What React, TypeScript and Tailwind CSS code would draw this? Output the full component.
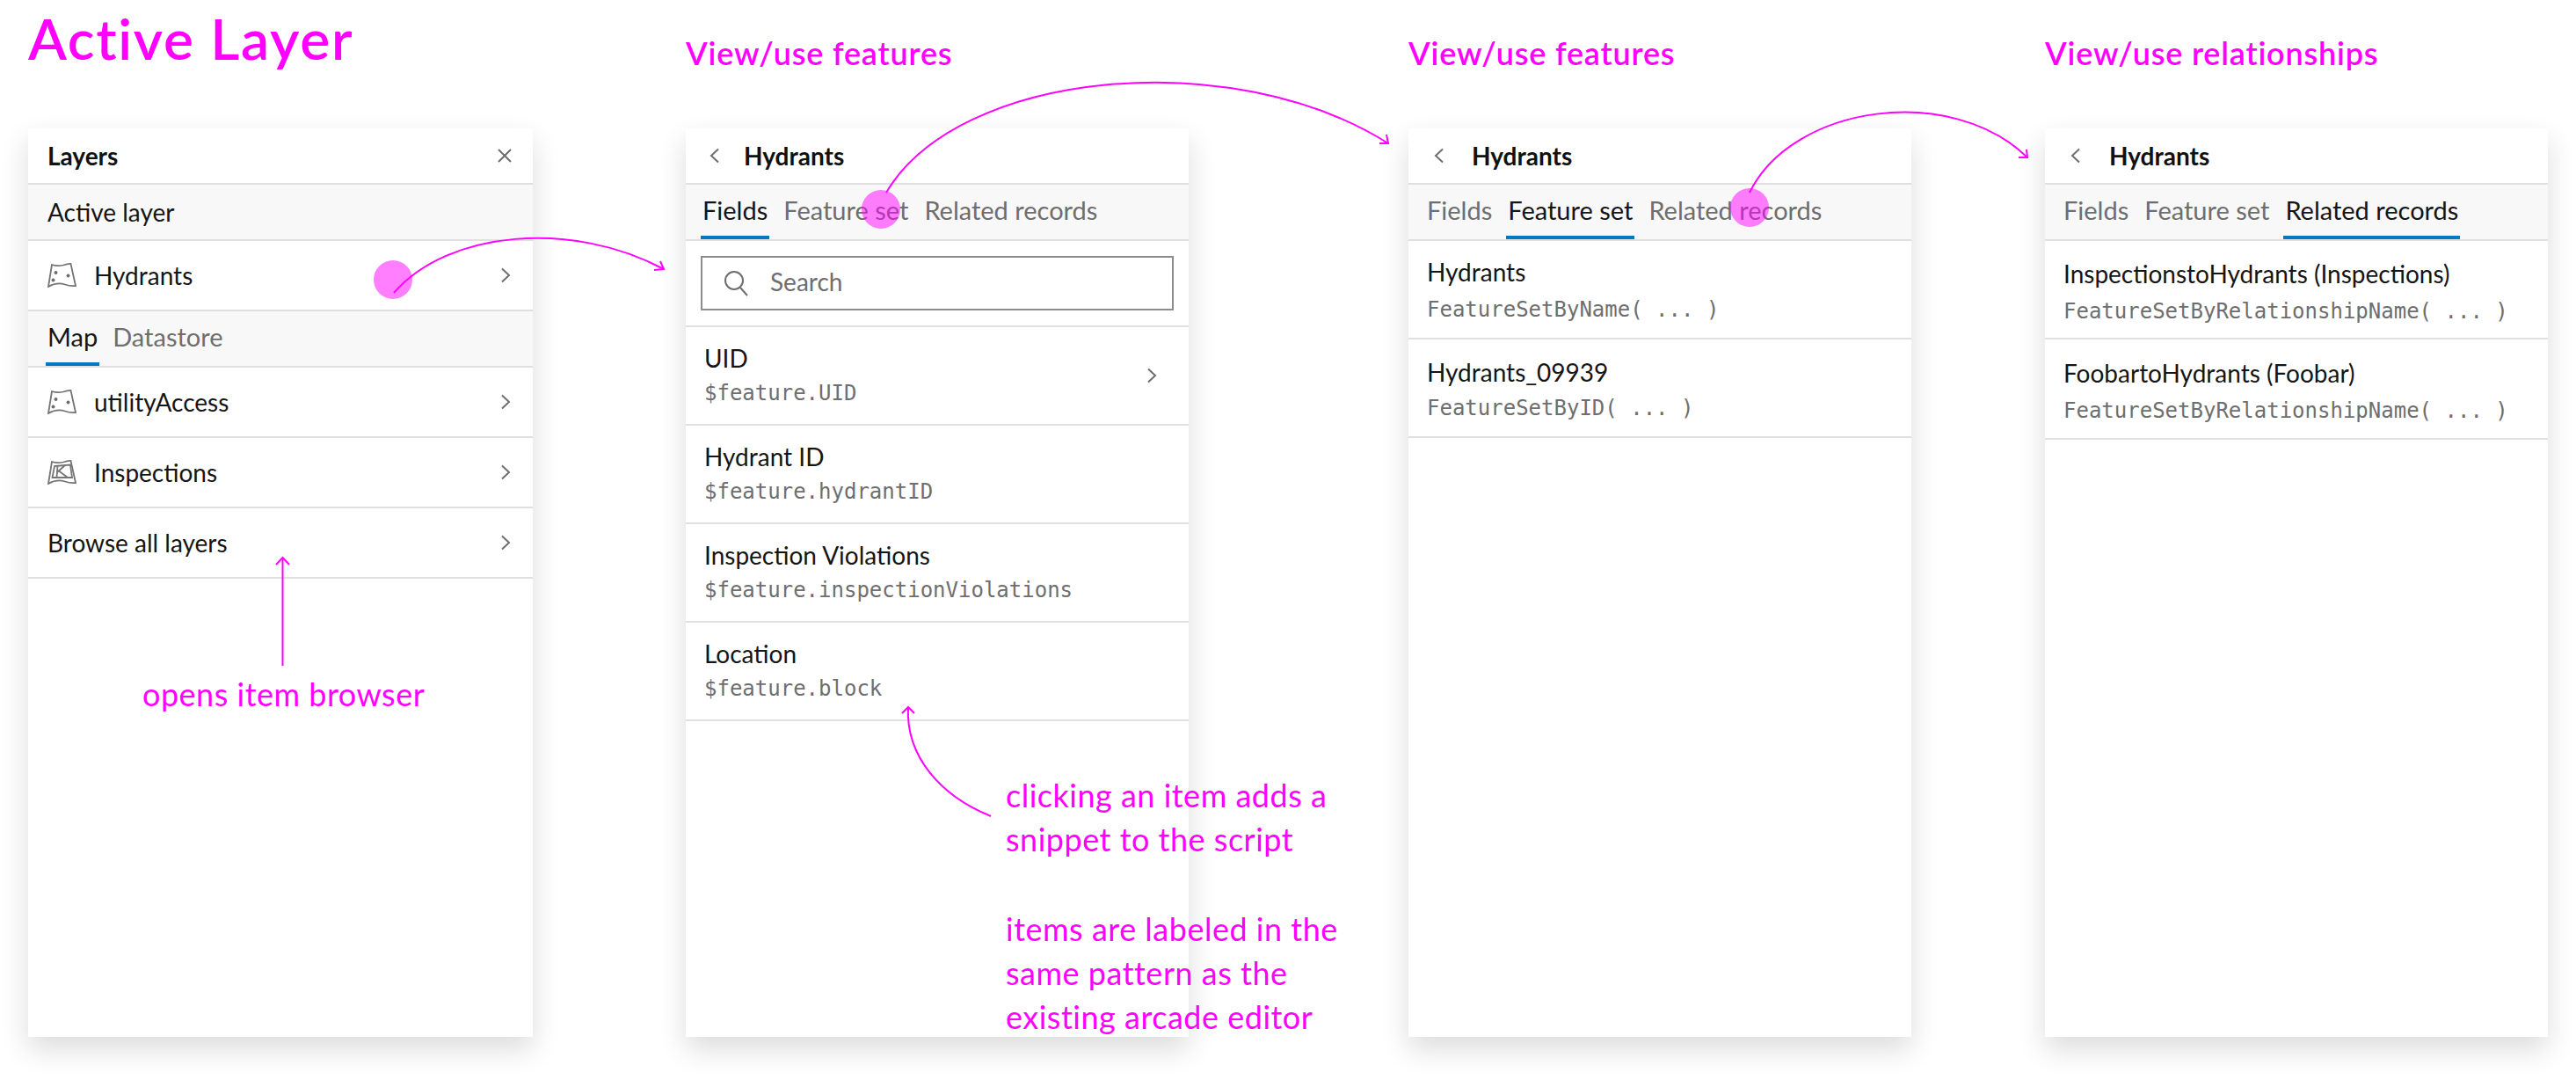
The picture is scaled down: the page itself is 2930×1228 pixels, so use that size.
import React from "react";

const Chevron = ({ dir = "right" }: { dir?: "right" | "left" }) => (
  <svg width="12" height="18" viewBox="0 0 12 18" fill="none" stroke="#6e6e6e" strokeWidth="2" className="shrink-0">
    {dir === "right" ? <path d="M2 1.5 L10 9 L2 16.5" /> : <path d="M10 1.5 L2 9 L10 16.5" />}
  </svg>
);

const OUTLINE = "M5 2 C 10 3.5 14 3.5 18 2.5 C 21 1.5 24 0.5 26.5 1 L 32 26 C 27 26.5 24 26 20 24.5 C 14 22.5 8 23 1 27 Z";

const LayerIcon = () => (
  <svg width="33" height="28" viewBox="0 0 33 28" fill="none" stroke="#757575" strokeWidth="1.8" className="shrink-0">
    <path d={OUTLINE} />
    <circle cx="9.5" cy="11" r="2" fill="#6e6e6e" stroke="none" />
    <circle cx="23.5" cy="14.5" r="2" fill="#6e6e6e" stroke="none" />
    <circle cx="6.5" cy="19.5" r="2" fill="#6e6e6e" stroke="none" />
  </svg>
);

const InspectIcon = () => (
  <svg width="33" height="28" viewBox="0 0 33 28" fill="none" stroke="#757575" strokeWidth="1.8" className="shrink-0">
    <path d={OUTLINE} />
    <path d="M8 7 L 26 5.5 L 28 20 L 5.5 20 Z" />
    <path d="M11.5 6.5 L 10.5 20 M 11 14 L 20 6 M 13 12.5 L 23 20" />
  </svg>
);

const Tabs = ({ active, items, left, gap = "gap-[14px]" }: { active: number; items: string[]; left: string; gap?: string }) => (
  <div className={`flex items-stretch h-[64px] bg-[#f8f8f8] border-b-2 border-[#e0e0e0] ${gap} ${left}`}>
    {items.map((t, i) => (
      <div
        key={t}
        className={
          i === active
            ? "flex items-center px-[2px] text-[29px] text-[#151515] border-b-4 border-[#0079c1]"
            : "flex items-center px-[2px] text-[29px] text-[#6e6e6e] border-b-4 border-transparent"
        }
      >
        <span>{t}</span>
      </div>
    ))}
  </div>
);

const Header = ({ title, left, chevronGap }: { title: string; left: string; chevronGap: string }) => (
  <div className={`flex items-center h-[64px] border-b-2 border-[#e0e0e0] ${left} ${chevronGap}`}>
    <Chevron dir="left" />
    <span className="text-[28px] font-bold text-[#111]">{title}</span>
  </div>
);

const Row = ({ icon, label }: { icon?: React.ReactNode; label: string }) => (
  <div className="flex items-center h-[80px] border-b-2 border-[#e0e0e0] pl-[22px] pr-[25px]">
    {icon ? <span className="w-[53px] flex shrink-0">{icon}</span> : null}
    <span className="flex-1 text-[28px] text-[#151515]">{label}</span>
    <Chevron />
  </div>
);

const Item = ({
  name,
  code,
  chevron,
  h = "h-[112px]",
  nameShift = "",
  codeShift = "",
}: {
  name: string;
  code: string;
  chevron?: boolean;
  h?: string;
  nameShift?: string;
  codeShift?: string;
}) => (
  <div className={`flex items-center ${h} border-b-2 border-[#e0e0e0] pl-[21px] pr-[36px]`}>
    <div className="flex-1 flex flex-col">
      <span className={`relative text-[28px] leading-[40px] text-[#151515] ${nameShift}`}>{name}</span>
      <span className={`relative font-['DejaVu_Sans_Mono',monospace] text-[24px] leading-[40px] text-[#6e6e6e] whitespace-pre ${codeShift}`}>{code}</span>
    </div>
    {chevron ? <Chevron /> : null}
  </div>
);

const Panel = ({ w, children }: { w: string; children: React.ReactNode }) => (
  <div className={`${w} h-[1033px] bg-white shadow-[0_14px_30px_rgba(0,0,0,0.14)] flex flex-col`}>{children}</div>
);

const Heading = ({ children }: { children: React.ReactNode }) => (
  <div className="h-[146px] pt-[38px] text-[36px] tracking-[0.8px] leading-[44px] font-semibold text-[#ff00ff] whitespace-nowrap">{children}</div>
);

const Note = ({ className, lines }: { className: string; lines: string[] }) => (
  <div className={`absolute z-20 text-[36px] tracking-[0.5px] leading-[50px] text-[#ff00ff] whitespace-nowrap ${className}`}>
    {lines.map((l) => (
      <div key={l}>{l}</div>
    ))}
  </div>
);

const TABS = ["Fields", "Feature set", "Related records"];

export default function App() {
  return (
    <div className="relative w-[2930px] h-[1228px] bg-white overflow-hidden font-['Lato',sans-serif]">
      <div className="flex pl-[32px]">
        <div className="flex flex-col">
          <div className="h-[146px] pt-[2px] text-[64px] tracking-[1.7px] leading-[84px] font-semibold text-[#ff00ff] whitespace-nowrap">Active Layer</div>
          <Panel w="w-[574px]">
            <div className="flex items-center justify-between h-[64px] border-b-2 border-[#e0e0e0] pl-[22px] pr-[23px]">
              <span className="text-[28px] font-bold text-[#111]">Layers</span>
              <svg width="18" height="18" viewBox="0 0 18 18" stroke="#6e6e6e" strokeWidth="2">
                <path d="M2 2 L16 16 M16 2 L2 16" />
              </svg>
            </div>
            <div className="flex items-center h-[64px] bg-[#f8f8f8] border-b-2 border-[#e0e0e0] pl-[22px] text-[28px] text-[#151515]">Active layer</div>
            <Row icon={<LayerIcon />} label="Hydrants" />
            <Tabs active={0} items={["Map", "Datastore"]} left="pl-[20px]" gap="gap-[13px]" />
            <Row icon={<LayerIcon />} label="utilityAccess" />
            <Row icon={<InspectIcon />} label="Inspections" />
            <Row label="Browse all layers" />
          </Panel>
        </div>

        <div className="flex flex-col ml-[174px]">
          <Heading>View/use features</Heading>
          <Panel w="w-[572px]">
            <Header title="Hydrants" left="pl-[27px]" chevronGap="gap-[27px]" />
            <Tabs active={0} items={TABS} left="pl-[17px]" />
            <div className="h-[98px] border-b-2 border-[#e0e0e0] px-[17px] py-[17px]">
              <div className="flex items-center h-[62px] border-2 border-[#8c8c8c] pl-[24px] gap-[25px]">
                <svg width="28" height="30" viewBox="0 0 28 30" fill="none" stroke="#6e6e6e" strokeWidth="2">
                  <circle cx="12" cy="12" r="10" />
                  <path d="M19 20 L27 29" />
                </svg>
                <span className="relative top-[-2px] text-[28px] text-[#6e6e6e]">Search</span>
              </div>
            </div>
            <Item name="UID" code="$feature.UID" chevron />
            <Item name="Hydrant ID" code="$feature.hydrantID" />
            <Item name="Inspection Violations" code="$feature.inspectionViolations" />
            <Item name="Location" code="$feature.block" />
          </Panel>
        </div>

        <div className="flex flex-col ml-[250px]">
          <Heading>View/use features</Heading>
          <Panel w="w-[572px]">
            <Header title="Hydrants" left="pl-[29px]" chevronGap="gap-[31px]" />
            <Tabs active={1} items={TABS} left="pl-[19px]" />
            <Item name="Hydrants" code="FeatureSetByName( ... )" codeShift="top-[3px]" />
            <Item name="Hydrants_09939" code="FeatureSetByID( ... )" nameShift="top-[2px]" codeShift="top-[3px]" />
          </Panel>
        </div>

        <div className="flex flex-col ml-[152px]">
          <Heading>View/use relationships</Heading>
          <Panel w="w-[572px]">
            <Header title="Hydrants" left="pl-[29px]" chevronGap="gap-[32px]" />
            <Tabs active={2} items={TABS} left="pl-[19px]" />
            <Item name="InspectionstoHydrants (Inspections)" code="FeatureSetByRelationshipName( ... )" nameShift="top-[2px]" codeShift="top-[5px]" />
            <Item name="FoobartoHydrants (Foobar)" code="FeatureSetByRelationshipName( ... )" h="h-[114px]" nameShift="top-[2px]" codeShift="top-[5px]" />
          </Panel>
        </div>
      </div>

      <Note className="left-[162px] top-[764px]" lines={["opens item browser"]} />
      <Note className="left-[1144px] top-[879px]" lines={["clicking an item adds a", "snippet to the script"]} />
      <Note className="left-[1144px] top-[1031px]" lines={["items are labeled in the", "same pattern as the", "existing arcade editor"]} />

      <svg className="absolute left-0 top-0 z-10 pointer-events-none" width="2930" height="1228" fill="none">
        <circle cx="447" cy="318" r="22" fill="#ff00ff" fillOpacity="0.5" />
        <circle cx="1002" cy="238" r="22" fill="#ff00ff" fillOpacity="0.5" />
        <circle cx="1990" cy="236" r="22" fill="#ff00ff" fillOpacity="0.5" />
        <g stroke="#ff00ff" strokeWidth="2">
          <path d="M448 333 C 510 262, 650 250, 755 306" />
          <path d="M744 307 L755 306 L751 297" />
          <path d="M1008 219 C 1090 80, 1400 50, 1579 163" />
          <path d="M1569 163 L1579 163 L1577 153" />
          <path d="M1990 219 C 2040 118, 2220 95, 2306 179" />
          <path d="M2296 179 L2306 179 L2305 170" />
          <path d="M321.5 757 L321.5 634" />
          <path d="M314 642 L321.5 634 L329 642" />
          <path d="M1127 928 C 1070 905, 1030 860, 1033 804" />
          <path d="M1026 811 L1033 804 L1040 811" />
        </g>
      </svg>
    </div>
  );
}
